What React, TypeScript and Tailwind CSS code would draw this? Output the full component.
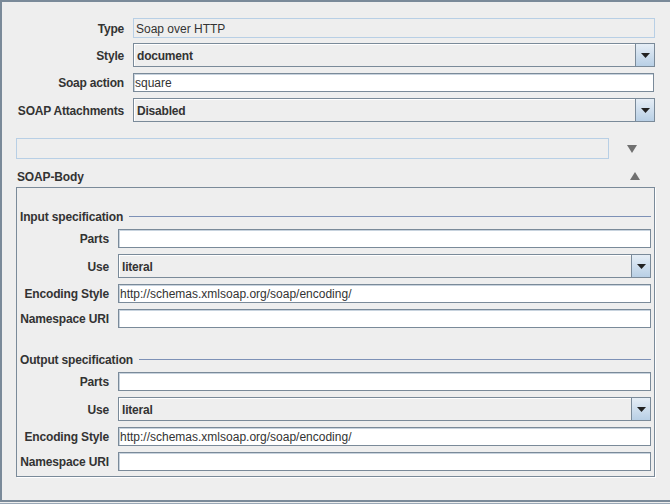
import React from 'react';

const Caret = () => (
  <svg width="9" height="5" viewBox="0 0 9 5" className="block">
    <path d="M0 0h9L4.5 5z" fill="#222" />
  </svg>
);

const TextField = ({ value = '', className = '' }: { value?: string; className?: string }) => (
  <div
    className={`h-[19px] bg-white border border-[#7a8a99] shadow-[inset_1px_1px_0_#c8d3de] flex items-center pl-[1px] pt-[1px] text-[#333] truncate ${className}`}
  >
    {value}
  </div>
);

const ReadOnlyField = ({ value = '', className = '' }: { value?: string; className?: string }) => (
  <div className={`bg-[#eeeeee] border border-[#b8cfe5] flex items-center pl-[1px] pt-[1px] text-[#333] ${className}`}>
    {value}
  </div>
);

const Combo = ({ value, className = '' }: { value: string; className?: string }) => (
  <div className={`h-[24px] flex border border-[#7a8a99] bg-[#eeeeee] ${className}`}>
    <div className="flex-1 flex items-center pl-[3px] pt-[1px] font-bold tracking-[-0.2px] text-[#333] shadow-[inset_1px_1px_0_#ffffff]">
      {value}
    </div>
    <div className="w-[19px] border-l border-[#7a8a99] bg-gradient-to-b from-[#e6eef6] to-[#b8cfe5] flex items-center justify-center">
      <Caret />
    </div>
  </div>
);

const TopRow = ({ label, children, className = '' }: { label: string; children: React.ReactNode; className?: string }) => (
  <div className={`flex items-center ${className}`}>
    <div className="w-[122px] pt-[1px] text-right font-bold tracking-[-0.2px] text-[#333] leading-none">{label}</div>
    <div className="ml-[9px] w-[522px]">{children}</div>
  </div>
);

const SpecRow = ({ label, children, className = '' }: { label: string; children: React.ReactNode; className?: string }) => (
  <div className={`flex items-center ${className}`}>
    <div className="w-[92px] pt-[1px] text-right font-bold tracking-[-0.15px] text-[#333] leading-none whitespace-nowrap">{label}</div>
    <div className="ml-[9px] w-[533px]">{children}</div>
  </div>
);

const SpecTitle = ({ title, className = '' }: { title: string; className?: string }) => (
  <div className={`h-[14px] flex items-center pl-[3px] pr-[3px] ${className}`}>
    <span className="pt-[1px] font-bold tracking-[-0.15px] text-[#333] leading-none whitespace-nowrap">{title}</span>
    <div className="ml-[6px] flex-1 h-px bg-[#7d91b6]" />
  </div>
);

const Spec = ({ title, first }: { title: string; first?: boolean }) => (
  <div className={first ? 'pt-[21px]' : 'mt-[24px]'}>
    <SpecTitle title={title} />
    <SpecRow label="Parts" className="mt-[6px]">
      <TextField />
    </SpecRow>
    <SpecRow label="Use" className="mt-[6px]">
      <Combo value="literal" />
    </SpecRow>
    <SpecRow label="Encoding Style" className="mt-[6px]">
      <TextField value="http://schemas.xmlsoap.org/soap/encoding/" />
    </SpecRow>
    <SpecRow label="Namespace URI" className="mt-[6px]">
      <TextField />
    </SpecRow>
  </div>
);

export default function App() {
  return (
    <div className="w-[670px] h-[504px] bg-[#eeeeee] font-['Liberation_Sans',Arial,sans-serif] text-[12px] overflow-hidden">
      <div className="h-[502px] border-t-2 border-l-2 border-b-2 border-[#7a8a99] pt-[16px]">
        <TopRow label="Type">
          <ReadOnlyField value="Soap over HTTP" className="h-[20px] pl-[2px]" />
        </TopRow>
        <TopRow label="Style" className="mt-[5px]">
          <Combo value="document" />
        </TopRow>
        <TopRow label="Soap action" className="mt-[6px]">
          <TextField value="square" className="w-[521px]" />
        </TopRow>
        <TopRow label="SOAP Attachments" className="mt-[6px]">
          <Combo value="Disabled" />
        </TopRow>

        <div className="mt-[16px] ml-[14px] flex items-center">
          <ReadOnlyField className="w-[593px] h-[21px]" />
          <svg width="10" height="8" viewBox="0 0 10 8" className="ml-[18px]">
            <path d="M0 0h10L5 8z" fill="#707070" />
          </svg>
        </div>

        <div className="mt-[9px] ml-[15px] h-[16px] flex items-center">
          <span className="pt-[1px] font-bold tracking-[-0.15px] text-[#333] leading-none">SOAP-Body</span>
          <svg width="10" height="8" viewBox="0 0 10 8" className="ml-[546px]">
            <path d="M5 0l5 8H0z" fill="#707070" />
          </svg>
        </div>

        <div className="mt-[3px] ml-[14px] w-[639px] border border-[#7a8a99] shadow-[1px_1px_0_#ffffff] pb-[5px]">
          <Spec title="Input specification" first />
          <Spec title="Output specification" />
        </div>
      </div>
      <div className="h-[2px] border-b border-[#9aa8b6]" />
    </div>
  );
}
